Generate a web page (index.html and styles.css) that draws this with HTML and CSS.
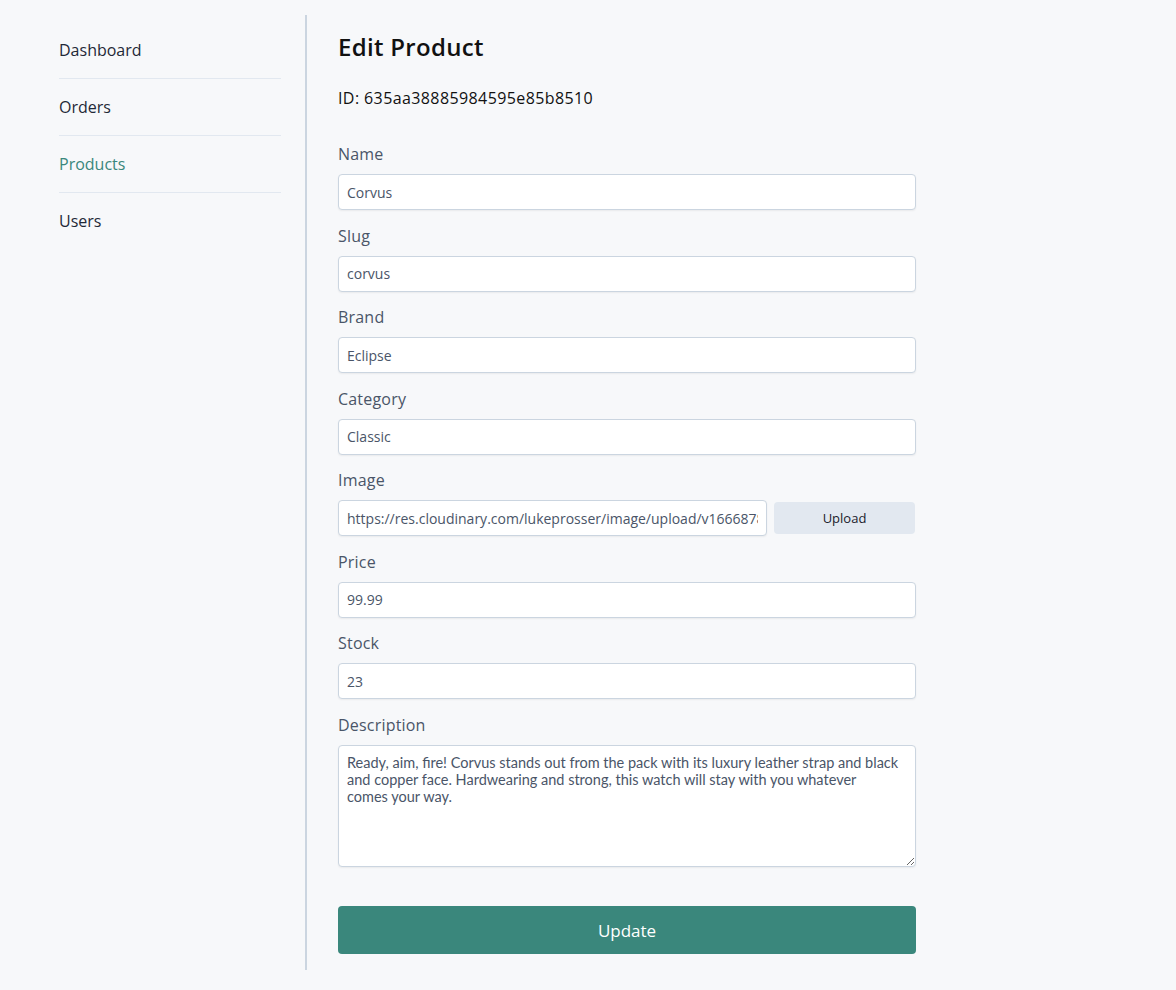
FILE: index.html
```html
<!DOCTYPE html>
<html lang="en">
<head>
<meta charset="utf-8">
<title>Edit Product</title>
<link rel="stylesheet" href="styles.css">
</head>
<body>
<div class="layout">
  <aside class="sidebar">
    <nav class="nav">
      <a class="nav-item" href="#">Dashboard</a>
      <a class="nav-item" href="#">Orders</a>
      <a class="nav-item active" href="#">Products</a>
      <a class="nav-item" href="#">Users</a>
    </nav>
  </aside>
  <main class="main">
    <h1 class="title">Edit Product</h1>
    <p class="id">ID: 635aa38885984595e85b8510</p>
    <form class="form">
      <div class="field">
        <label class="label">Name</label>
        <input class="input" type="text" value="Corvus">
      </div>
      <div class="field">
        <label class="label">Slug</label>
        <input class="input" type="text" value="corvus">
      </div>
      <div class="field">
        <label class="label">Brand</label>
        <input class="input" type="text" value="Eclipse">
      </div>
      <div class="field">
        <label class="label">Category</label>
        <input class="input" type="text" value="Classic">
      </div>
      <div class="field">
        <label class="label">Image</label>
        <div class="image-row">
          <input class="input image-input" type="text" value="https://res.cloudinary.com/lukeprosser/image/upload/v1666878889/corvus.jpg">
          <button type="button" class="upload">Upload</button>
        </div>
      </div>
      <div class="field">
        <label class="label">Price</label>
        <input class="input" type="text" value="99.99">
      </div>
      <div class="field">
        <label class="label">Stock</label>
        <input class="input" type="text" value="23">
      </div>
      <div class="field">
        <label class="label">Description</label>
        <textarea class="input textarea">Ready, aim, fire! Corvus stands out from the pack with its luxury leather strap and black
and copper face. Hardwearing and strong, this watch will stay with you whatever
comes your way.</textarea>
      </div>
      <button type="button" class="submit">Update</button>
    </form>
  </main>
</div>
</body>
</html>
```

FILE: styles.css
```css
* { box-sizing: border-box; }
html, body {
  margin: 0;
  background: #f7f8fa;
  font-family: "Open Sans", "Noto Sans", "Liberation Sans", sans-serif;
  color: #1a202c;
}
.layout {
  display: flex;
  padding: 15px 0 20px 0;
}
.sidebar {
  width: 307px;
  padding: 7px 24px 0 59px;
  border-right: 2px solid #cbd5e0;
  min-height: 955px;
}
.nav {
  display: flex;
  flex-direction: column;
}
.nav-item {
  display: block;
  padding: 16px 0;
  font-size: 16px;
  line-height: 24px;
  color: #1f2937;
  text-decoration: none;
  border-bottom: 1px solid #e2e8f0;
}
.nav-item:last-child { border-bottom: none; }
.nav-item.active { color: #3a877c; }
.main {
  padding-left: 31px;
  width: 609px;
}
.title {
  margin: 16px 0 0 0;
  font-size: 24px;
  line-height: 32px;
  font-weight: 600;
  color: #111;
  letter-spacing: 0.3px;
}
.id {
  margin: 23px 0 0 0;
  font-size: 16px;
  line-height: 24px;
  color: #111;
  letter-spacing: 0.4px;
}
.form {
  margin-top: 32px;
  display: flex;
  flex-direction: column;
  gap: 13.5px;
}
.field {
  display: flex;
  flex-direction: column;
  gap: 8px;
}
.label {
  font-size: 16px;
  line-height: 24px;
  font-weight: 500;
  color: #4a5568;
  letter-spacing: 0.2px;
}
.input {
  width: 100%;
  height: 36px;
  padding: 0 8px;
  font-family: inherit;
  font-size: 14px;
  color: #4a5568;
  background: #fff;
  border: 1px solid #cbd5e0;
  border-radius: 4px;
  box-shadow: 0 1px 2px rgba(0,0,0,0.06);
  outline: none;
}
.image-row {
  display: flex;
  align-items: center;
  gap: 7px;
}
.image-input {
  flex: 1;
  width: auto;
  min-width: 0;
}
.upload {
  width: 141px;
  height: 32px;
  border: none;
  border-radius: 4px;
  background: #e2e8f0;
  color: #1a202c;
  font-family: inherit;
  font-size: 13px;
  margin-right: 1px;
}
.textarea {
  height: 122px;
  padding: 8px;
  font-family: Lato, "Open Sans", sans-serif;
  font-size: 14.5px;
  line-height: 17px;
  resize: vertical;
}
.submit {
  margin-top: 26px;
  height: 48px;
  width: 100%;
  border: none;
  border-radius: 4px;
  background: #3a877c;
  color: #fff;
  font-family: inherit;
  font-size: 17px;
}
```
